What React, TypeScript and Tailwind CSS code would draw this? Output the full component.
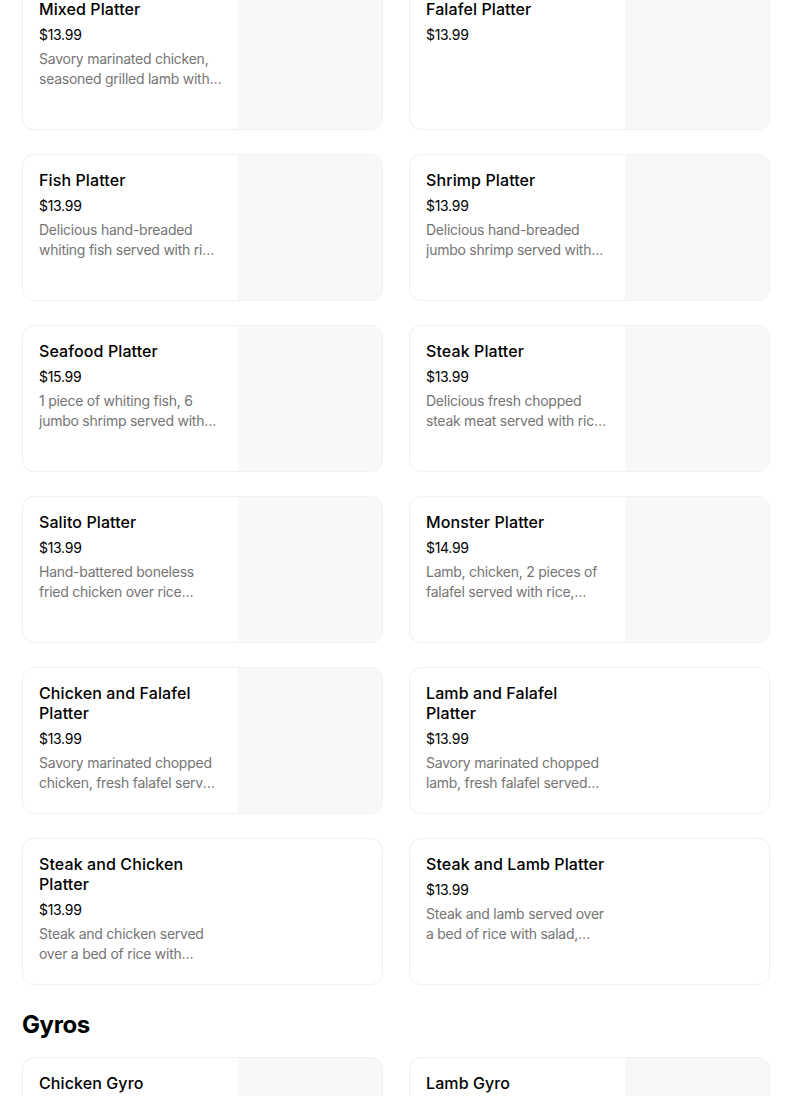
import React from "react";

interface MenuItem {
  name: string;
  price: string;
  description?: string;
  hasImage: boolean;
}

const platters: MenuItem[] = [
  {
    name: "Mixed Platter",
    price: "$13.99",
    description: "Savory marinated chicken, seasoned grilled lamb with rice, salad, white sauce and hot sauce.",
    hasImage: true,
  },
  { name: "Falafel Platter", price: "$13.99", hasImage: true },
  {
    name: "Fish Platter",
    price: "$13.99",
    description: "Delicious hand-breaded whiting fish served with rice, salad and tartar sauce.",
    hasImage: true,
  },
  {
    name: "Shrimp Platter",
    price: "$13.99",
    description: "Delicious hand-breaded jumbo shrimp served with rice, salad and cocktail sauce.",
    hasImage: true,
  },
  {
    name: "Seafood Platter",
    price: "$15.99",
    description: "1 piece of whiting fish, 6 jumbo shrimp served with rice, salad and tartar sauce.",
    hasImage: true,
  },
  {
    name: "Steak Platter",
    price: "$13.99",
    description: "Delicious fresh chopped steak meat served with rice, salad, white sauce and hot sauce.",
    hasImage: true,
  },
  {
    name: "Salito Platter",
    price: "$13.99",
    description: "Hand-battered boneless fried chicken over rice salad, white sauce and hot sauce.",
    hasImage: true,
  },
  {
    name: "Monster Platter",
    price: "$14.99",
    description: "Lamb, chicken, 2 pieces of falafel served with rice, salad, white sauce and hot sauce.",
    hasImage: true,
  },
  {
    name: "Chicken and Falafel Platter",
    price: "$13.99",
    description: "Savory marinated chopped chicken, fresh falafel served with rice, salad and white sauce.",
    hasImage: true,
  },
  {
    name: "Lamb and Falafel Platter",
    price: "$13.99",
    description: "Savory marinated chopped lamb, fresh falafel served with rice, salad and white sauce.",
    hasImage: false,
  },
  {
    name: "Steak and Chicken Platter",
    price: "$13.99",
    description: "Steak and chicken served over a bed of rice with salad, white sauce and hot sauce.",
    hasImage: false,
  },
  {
    name: "Steak and Lamb Platter",
    price: "$13.99",
    description: "Steak and lamb served over a bed of rice with salad, white sauce and hot sauce.",
    hasImage: false,
  },
];

const gyros: MenuItem[] = [
  { name: "Chicken Gyro", price: "$9.99", description: "Marinated chicken wrapped in warm pita.", hasImage: true },
  { name: "Lamb Gyro", price: "$9.99", description: "Seasoned lamb wrapped in warm pita.", hasImage: true },
];

function ItemCard({ item }: { item: MenuItem }) {
  return (
    <div className="flex h-[147px] overflow-hidden rounded-xl border border-[#f0f0f0] bg-white">
      <div className="w-[215px] shrink-0 px-4 pt-[15px]">
        <div className="text-[16px] leading-5 font-medium tracking-[0.1px] text-black">{item.name}</div>
        <div className="mt-[6px] text-[14px] leading-5 tracking-[-0.3px] text-black">{item.price}</div>
        {item.description && (
          <div className="mt-[4px] line-clamp-2 text-[14px] leading-5 tracking-[-0.25px] text-[#757575]">
            {item.description}
          </div>
        )}
      </div>
      {item.hasImage && <div className="flex-1 bg-[#f8f8f8]" />}
    </div>
  );
}

export default function App() {
  return (
    <div className="min-h-screen bg-white font-['Inter',sans-serif] antialiased">
      <div className="-mt-[17px] ml-[22px] w-[748px]">
        <div className="grid grid-cols-[361px_361px] gap-x-[26px] gap-y-[24px]">
          {platters.map((item) => (
            <ItemCard key={item.name} item={item} />
          ))}
        </div>
        <h2 className="mt-[24px] mb-[16px] text-[24px] leading-8 font-bold tracking-[-0.4px] text-black">Gyros</h2>
        <div className="grid grid-cols-[361px_361px] gap-x-[26px] gap-y-[24px]">
          {gyros.map((item) => (
            <ItemCard key={item.name} item={item} />
          ))}
        </div>
      </div>
    </div>
  );
}
